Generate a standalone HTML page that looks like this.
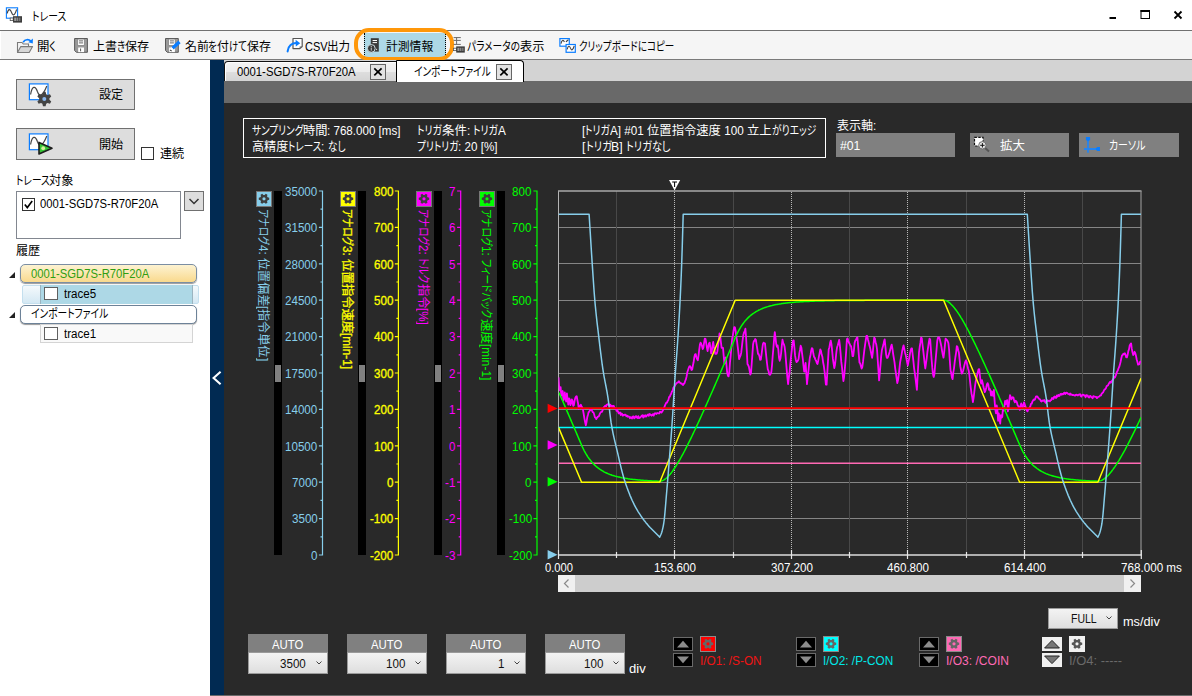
<!DOCTYPE html>
<html lang="ja"><head><meta charset="utf-8"><title>トレース</title>
<style>
html,body{margin:0;padding:0;}
body{width:1192px;height:696px;position:relative;overflow:hidden;background:#fff;font-family:"Liberation Sans","Noto Sans CJK JP",sans-serif;font-size:12px;}
.a{position:absolute;box-sizing:border-box;}
.t{position:absolute;white-space:nowrap;display:block;font-feature-settings:"palt";}
.r{position:absolute;top:0;white-space:pre;transform-origin:0 50%;}
svg{position:absolute;overflow:visible;}
</style></head><body>
<div class="a" style="left:0px;top:0px;width:1192px;height:30px;background:#fff;"></div>
<span class="t" style="left:31.5px;top:7.6499999999999995px;height:18px;line-height:18px;font-size:12px;color:#000;"><span class="r" style="left:0.00px;transform:scaleX(0.818);">トレース</span></span>
<svg style="left:1100px;top:0" width="92" height="30" viewBox="0 0 92 30"><rect x="9.5" y="17" width="6.5" height="2" fill="#000"/><rect x="41" y="10.5" width="8.5" height="8" fill="none" stroke="#000" stroke-width="1"/><rect x="40.5" y="10" width="9.5" height="2" fill="#000"/><path d="M74.5 11.5 L81.5 18.5 M81.5 11.5 L74.5 18.5" stroke="#000" stroke-width="1.8" fill="none"/></svg>
<div class="a" style="left:0px;top:30px;width:1192px;height:1px;background:#707070;"></div>
<div class="a" style="left:1px;top:31px;width:1191px;height:28px;background:#f5f5f5;"></div>
<div class="a" style="left:0px;top:59px;width:1192px;height:1px;background:#7a7a7a;"></div>
<div class="a" style="left:364px;top:32.5px;width:82px;height:24.7px;background:#add8e6;border-left:1px dotted #000;border-right:1px dotted #000;"></div>
<div class="a" style="left:354px;top:28px;width:100px;height:33.2px;border:4px solid #ff9709;border-radius:15px;"></div>
<span class="t" style="left:36.5px;top:37.95px;height:18px;line-height:18px;font-size:12px;color:#000;"><span class="r" style="left:0.00px;transform:scaleX(1.036);">開</span><span class="r" style="left:12.45px;transform:scaleX(0.818);">く</span></span>
<span class="t" style="left:92.5px;top:37.95px;height:18px;line-height:18px;font-size:12px;color:#000;"><span class="r" style="left:0.00px;transform:scaleX(1.007);">上書</span><span class="r" style="left:24.17px;transform:scaleX(0.795);">き</span><span class="r" style="left:32.53px;transform:scaleX(1.007);">保存</span></span>
<span class="t" style="left:184.5px;top:37.95px;height:18px;line-height:18px;font-size:12px;color:#000;"><span class="r" style="left:0.00px;transform:scaleX(0.993);">名前</span><span class="r" style="left:23.85px;transform:scaleX(0.785);">を</span><span class="r" style="left:32.55px;transform:scaleX(0.993);">付</span><span class="r" style="left:44.48px;transform:scaleX(0.785);">けて</span><span class="r" style="left:62.35px;transform:scaleX(0.993);">保存</span></span>
<span class="t" style="left:304.5px;top:37.95px;height:18px;line-height:18px;font-size:12px;color:#000;"><span class="r" style="left:0.00px;transform:scaleX(0.915);">CSV</span><span class="r" style="left:22.58px;transform:scaleX(0.963);">出力</span></span>
<span class="t" style="left:385.8px;top:37.95px;height:18px;line-height:18px;font-size:12px;color:#000;"><span class="r" style="left:0.00px;transform:scaleX(0.983);">計測情報</span></span>
<span class="t" style="left:467.1px;top:37.95px;height:18px;line-height:18px;font-size:12px;color:#000;"><span class="r" style="left:0.00px;transform:scaleX(0.805);">パラメータの</span><span class="r" style="left:52.92px;transform:scaleX(1.019);">表示</span></span>
<span class="t" style="left:578.5px;top:37.95px;height:18px;line-height:18px;font-size:12px;color:#000;"><span class="r" style="left:0.00px;transform:scaleX(0.794);">クリップボードにコピー</span></span>
<div class="a" style="left:0px;top:60px;width:210px;height:636px;background:#fff;"></div>
<div class="a" style="left:210px;top:60px;width:14px;height:636px;background:#012a52;"></div>
<div class="a" style="left:224px;top:60px;width:968px;height:21px;background:#d3d3d3;"></div>
<div class="a" style="left:224px;top:81px;width:968px;height:22px;background:#696969;"></div>
<div class="a" style="left:224px;top:103px;width:968px;height:593px;background:#292929;"></div>
<div class="a" style="left:16px;top:79px;width:119px;height:31px;background:#dddddd;border:1px solid #707070;"></div>
<div class="a" style="left:16px;top:128px;width:119px;height:32px;background:#dddddd;border:1px solid #707070;"></div>
<span class="t" style="left:99.0px;top:86.45px;height:18px;line-height:18px;font-size:12px;color:#000;"><span class="r" style="left:0.00px;transform:scaleX(1.008);">設定</span></span>
<span class="t" style="left:99.0px;top:135.95px;height:18px;line-height:18px;font-size:12px;color:#000;"><span class="r" style="left:0.00px;transform:scaleX(1.008);">開始</span></span>
<div class="a" style="left:141px;top:147px;width:13px;height:13px;background:#fff;border:1px solid #333;"></div>
<span class="t" style="left:160.0px;top:145.45px;height:18px;line-height:18px;font-size:12px;color:#000;"><span class="r" style="left:0.00px;transform:scaleX(1.008);">連続</span></span>
<span class="t" style="left:15.5px;top:172.45px;height:18px;line-height:18px;font-size:12px;color:#000;"><span class="r" style="left:0.00px;transform:scaleX(0.806);">トレース</span><span class="r" style="left:33.70px;transform:scaleX(1.020);">対象</span></span>
<div class="a" style="left:16px;top:191px;width:165px;height:48px;background:#fff;border:1px solid #828790;"></div>
<div class="a" style="left:21.5px;top:197.5px;width:13px;height:13px;background:#fff;border:1px solid #333;"></div>
<svg style="left:21.5px;top:197.5px" width="13" height="13" viewBox="0 0 13 13"><path d="M2.8 6.4 L5.3 9.6 L10.2 3" stroke="#000" stroke-width="1.6" fill="none"/></svg>
<span class="t" style="left:39.5px;top:195.15px;height:18px;line-height:18px;font-size:12px;color:#000;"><span class="r" style="left:0.00px;transform:scaleX(0.938);">0001-SGD7S-R70F20A</span></span>
<div class="a" style="left:184px;top:191px;width:20px;height:20px;background:#dddddd;border:1px solid #707070;"></div>
<svg style="left:184px;top:191px" width="20" height="20" viewBox="0 0 20 20"><path d="M5.5 8 L10 12.5 L14.5 8" stroke="#333" stroke-width="1.5" fill="none"/></svg>
<span class="t" style="left:15.5px;top:242.45px;height:18px;line-height:18px;font-size:12px;color:#000;"><span class="r" style="left:0.00px;transform:scaleX(1.008);">履歴</span></span>
<svg style="left:8px;top:268px" width="8" height="60" viewBox="0 0 8 60"><path d="M7 4 L7 10 L1 10 Z" fill="#222"/><path d="M7 44 L7 50 L1 50 Z" fill="#222"/></svg>
<div class="a" style="left:20px;top:264px;width:177px;height:19px;border:1px solid #7b8ea3;border-radius:5px;background:linear-gradient(#fdf3d2,#f9d98d);box-shadow:0 1px 1px #999;"></div>
<span class="t" style="left:30.5px;top:264.65px;height:18px;line-height:18px;font-size:12px;color:#2f9e12;"><span class="r" style="left:0.00px;transform:scaleX(0.938);">0001-SGD7S-R70F20A</span></span>
<div class="a" style="left:22px;top:284.5px;width:176.6px;height:19px;background:linear-gradient(#f4f9fc,#d4e8f3);border:1px solid #c4dfee;border-radius:2px;"></div>
<div class="a" style="left:40.2px;top:285px;width:152.6px;height:18.5px;background:#add8e6;border-left:1px solid #9bb4c0;border-right:1px solid #9bb4c0;"></div>
<div class="a" style="left:43.8px;top:287px;width:14px;height:13px;background:#fff;border:1px solid #606060;"></div>
<span class="t" style="left:63.5px;top:285.15px;height:18px;line-height:18px;font-size:12px;color:#000;"><span class="r" style="left:0.00px;transform:scaleX(0.965);">trace5</span></span>
<div class="a" style="left:20px;top:304.5px;width:177px;height:19px;border:1px solid #6d8298;border-radius:5px;background:#fff;box-shadow:0 1px 1px #999;"></div>
<span class="t" style="left:30.5px;top:305.45px;height:18px;line-height:18px;font-size:12px;color:#000;"><span class="r" style="left:0.00px;transform:scaleX(0.809);">インポートファイル</span></span>
<div class="a" style="left:40px;top:324px;width:153px;height:19.4px;background:#f9f9f9;border:1px solid #d4d4d4;"></div>
<div class="a" style="left:43.8px;top:327px;width:14px;height:13px;background:#fff;border:1px solid #606060;"></div>
<span class="t" style="left:63.5px;top:325.15px;height:18px;line-height:18px;font-size:12px;color:#000;"><span class="r" style="left:0.00px;transform:scaleX(0.965);">trace1</span></span>
<svg style="left:210px;top:368px" width="14" height="18" viewBox="0 0 14 18"><path d="M10.6 3.8 L3.6 10 L10.6 16.2" stroke="#fff" stroke-width="2.1" fill="none"/></svg>
<div class="a" style="left:224px;top:60.5px;width:173px;height:20.5px;background:linear-gradient(#f4f4f4,#ececec 52%,#dedede 52%,#d4d4d4);border:1px solid #111;border-bottom:none;border-radius:4px 0 0 0;box-shadow:inset 1px 1px 0 #fff;"></div>
<span class="t" style="left:237.0px;top:63.15px;height:18px;line-height:18px;font-size:12px;color:#000;"><span class="r" style="left:0.00px;transform:scaleX(0.941);">0001-SGD7S-R70F20A</span></span>
<div class="a" style="left:370px;top:64px;width:16px;height:15.6px;background:#e2e2e2;border:1.2px solid #666;"></div>
<svg style="left:370px;top:64px" width="16" height="16" viewBox="0 0 16 16"><path d="M4.3 4.3 L11.6 11.4 M11.6 4.3 L4.3 11.4" stroke="#000" stroke-width="1.7" fill="none"/></svg>
<div class="a" style="left:396px;top:59.6px;width:128px;height:22.4px;background:#fff;border:1.4px solid #000;border-left-width:1.8px;border-right-width:1.1px;border-bottom:none;border-radius:1px 4px 0 0;"></div>
<span class="t" style="left:413.5px;top:63.45px;height:18px;line-height:18px;font-size:12px;color:#000;"><span class="r" style="left:0.00px;transform:scaleX(0.804);">インポートファイル</span></span>
<div class="a" style="left:496px;top:64px;width:16px;height:15.6px;background:#e2e2e2;border:1.2px solid #666;"></div>
<svg style="left:496px;top:64px" width="16" height="16" viewBox="0 0 16 16"><path d="M4.3 4.3 L11.6 11.4 M11.6 4.3 L4.3 11.4" stroke="#000" stroke-width="1.7" fill="none"/></svg>
<div class="a" style="left:243px;top:118px;width:583px;height:40px;border:1px solid #fff;"></div>
<span class="t" style="left:251.5px;top:121.95px;height:18px;line-height:18px;font-size:12px;color:#fff;"><span class="r" style="left:0.00px;transform:scaleX(0.804);">サンプリング</span><span class="r" style="left:51.49px;transform:scaleX(1.018);">時間</span><span class="r" style="left:75.94px;transform:scaleX(0.967);">: 768.000 [ms]</span></span>
<span class="t" style="left:251.5px;top:137.95px;height:18px;line-height:18px;font-size:12px;color:#fff;"><span class="r" style="left:0.00px;transform:scaleX(1.010);">高精度</span><span class="r" style="left:36.39px;transform:scaleX(0.798);">トレース</span><span class="r" style="left:69.78px;transform:scaleX(0.960);">: </span><span class="r" style="left:76.19px;transform:scaleX(0.798);">なし</span></span>
<span class="t" style="left:416.9px;top:121.95px;height:18px;line-height:18px;font-size:12px;color:#fff;"><span class="r" style="left:0.00px;transform:scaleX(0.817);">トリガ</span><span class="r" style="left:24.96px;transform:scaleX(1.035);">条件</span><span class="r" style="left:49.81px;transform:scaleX(0.983);">: </span><span class="r" style="left:56.36px;transform:scaleX(0.817);">トリガ</span><span class="r" style="left:81.32px;transform:scaleX(0.983);">A</span></span>
<span class="t" style="left:416.9px;top:137.95px;height:18px;line-height:18px;font-size:12px;color:#fff;"><span class="r" style="left:0.00px;transform:scaleX(0.807);">プリトリガ</span><span class="r" style="left:41.50px;transform:scaleX(0.971);">: 20 [%]</span></span>
<span class="t" style="left:582.2px;top:121.95px;height:18px;line-height:18px;font-size:12px;color:#fff;"><span class="r" style="left:0.00px;transform:scaleX(0.976);">[</span><span class="r" style="left:3.26px;transform:scaleX(0.811);">トリガ</span><span class="r" style="left:28.04px;transform:scaleX(0.976);">A] #01 </span><span class="r" style="left:65.14px;transform:scaleX(1.027);">位置指令速度</span><span class="r" style="left:139.11px;transform:scaleX(0.976);"> 100 </span><span class="r" style="left:165.16px;transform:scaleX(1.027);">立上</span><span class="r" style="left:189.83px;transform:scaleX(0.811);">がりエッジ</span></span>
<span class="t" style="left:582.2px;top:137.95px;height:18px;line-height:18px;font-size:12px;color:#fff;"><span class="r" style="left:0.00px;transform:scaleX(1.019);">[</span><span class="r" style="left:3.41px;transform:scaleX(0.848);">トリガ</span><span class="r" style="left:29.29px;transform:scaleX(1.019);">B] </span><span class="r" style="left:44.24px;transform:scaleX(0.848);">トリガなし</span></span>
<span class="t" style="left:837.1px;top:116.95px;height:18px;line-height:18px;font-size:12px;color:#fff;"><span class="r" style="left:0.00px;">表示軸</span><span class="r" style="left:36.02px;transform:scaleX(0.950);">:</span></span>
<div class="a" style="left:836px;top:133px;width:119px;height:24px;background:#808080;"></div>
<span class="t" style="left:840.1px;top:136.65px;height:18px;line-height:18px;font-size:12px;color:#fff;"><span class="r" style="left:0.00px;transform:scaleX(1.018);">#01</span></span>
<div class="a" style="left:970px;top:133px;width:99px;height:24px;background:#808080;"></div>
<span class="t" style="left:999.5px;top:136.95px;height:18px;line-height:18px;font-size:12px;color:#fff;"><span class="r" style="left:0.00px;transform:scaleX(1.037);">拡大</span></span>
<div class="a" style="left:1079px;top:133px;width:100px;height:24px;background:#808080;"></div>
<span class="t" style="left:1108.9px;top:136.95px;height:18px;line-height:18px;font-size:12px;color:#fff;"><span class="r" style="left:0.00px;transform:scaleX(0.826);">カーソル</span></span>
<div class="a" style="left:256.0px;top:191px;width:16px;height:16px;background:#87ceeb;border:1px solid #777;"></div>
<svg style="left:256.0px;top:191px" width="16" height="16" viewBox="0 0 16 16"><path d="M11.63 6.36 L13.22 6.86 L13.22 8.74 L11.63 9.24 L11.06 10.22 L11.42 11.85 L9.80 12.79 L8.57 11.66 L7.43 11.66 L6.20 12.79 L4.58 11.85 L4.94 10.22 L4.37 9.24 L2.78 8.74 L2.78 6.86 L4.37 6.36 L4.94 5.38 L4.58 3.75 L6.20 2.81 L7.43 3.94 L8.57 3.94 L9.80 2.81 L11.42 3.75 L11.06 5.38Z M9.60 7.80 A1.6 1.6 0 1 0 6.40 7.80 A1.6 1.6 0 1 0 9.60 7.80Z" fill="#3e3e3e" fill-rule="evenodd"/></svg>
<div class="a" style="left:274px;top:191px;width:8px;height:363.6px;background:#000;"></div>
<div class="a" style="left:275px;top:364.5px;width:6px;height:17px;background:#808080;"></div>
<svg style="left:0;top:0" width="1192" height="696"><path d="M322.5 190.5 L322.5 555.5 M318.9 191.0 L322.5 191.0 M320.5 209.2 L322.5 209.2 M318.9 227.4 L322.5 227.4 M320.5 245.6 L322.5 245.6 M318.9 263.8 L322.5 263.8 M320.5 282.0 L322.5 282.0 M318.9 300.2 L322.5 300.2 M320.5 318.4 L322.5 318.4 M318.9 336.6 L322.5 336.6 M320.5 354.8 L322.5 354.8 M318.9 373.0 L322.5 373.0 M320.5 391.2 L322.5 391.2 M318.9 409.4 L322.5 409.4 M320.5 427.6 L322.5 427.6 M318.9 445.8 L322.5 445.8 M320.5 464.0 L322.5 464.0 M318.9 482.2 L322.5 482.2 M320.5 500.4 L322.5 500.4 M318.9 518.6 L322.5 518.6 M320.5 536.8 L322.5 536.8 M318.9 555.0 L322.5 555.0" stroke="#87ceeb" stroke-width="1.2" fill="none"/></svg>
<span class="t" style="left:317.29999999999995px;top:182.75px;height:18px;line-height:18px;font-size:12px;color:#87ceeb;"><span class="r" style="left:-32.25px;transform:scaleX(0.966);">35000</span></span>
<span class="t" style="left:317.29999999999995px;top:219.15px;height:18px;line-height:18px;font-size:12px;color:#87ceeb;"><span class="r" style="left:-32.25px;transform:scaleX(0.966);">31500</span></span>
<span class="t" style="left:317.29999999999995px;top:255.55000000000004px;height:18px;line-height:18px;font-size:12px;color:#87ceeb;"><span class="r" style="left:-32.25px;transform:scaleX(0.966);">28000</span></span>
<span class="t" style="left:317.29999999999995px;top:291.95px;height:18px;line-height:18px;font-size:12px;color:#87ceeb;"><span class="r" style="left:-32.25px;transform:scaleX(0.966);">24500</span></span>
<span class="t" style="left:317.29999999999995px;top:328.35px;height:18px;line-height:18px;font-size:12px;color:#87ceeb;"><span class="r" style="left:-32.25px;transform:scaleX(0.966);">21000</span></span>
<span class="t" style="left:317.29999999999995px;top:364.75px;height:18px;line-height:18px;font-size:12px;color:#87ceeb;"><span class="r" style="left:-32.25px;transform:scaleX(0.966);">17500</span></span>
<span class="t" style="left:317.29999999999995px;top:401.15px;height:18px;line-height:18px;font-size:12px;color:#87ceeb;"><span class="r" style="left:-32.25px;transform:scaleX(0.966);">14000</span></span>
<span class="t" style="left:317.29999999999995px;top:437.54999999999995px;height:18px;line-height:18px;font-size:12px;color:#87ceeb;"><span class="r" style="left:-32.25px;transform:scaleX(0.966);">10500</span></span>
<span class="t" style="left:317.29999999999995px;top:473.95px;height:18px;line-height:18px;font-size:12px;color:#87ceeb;"><span class="r" style="left:-25.80px;transform:scaleX(0.966);">7000</span></span>
<span class="t" style="left:317.29999999999995px;top:510.3499999999999px;height:18px;line-height:18px;font-size:12px;color:#87ceeb;"><span class="r" style="left:-25.80px;transform:scaleX(0.966);">3500</span></span>
<span class="t" style="left:317.29999999999995px;top:546.75px;height:18px;line-height:18px;font-size:12px;color:#87ceeb;"><span class="r" style="left:-6.45px;transform:scaleX(0.964);">0</span></span>
<span class="t" style="left:262.9px;top:200.25px;height:18px;line-height:18px;font-size:12px;color:#87ceeb;transform:rotate(90deg);transform-origin:0 50%;"><span class="r" style="left:0.00px;transform:scaleX(0.797);">アナログ</span><span class="r" style="left:35.86px;transform:scaleX(0.959);">4: </span><span class="r" style="left:48.65px;transform:scaleX(1.009);">位置偏差</span><span class="r" style="left:97.12px;transform:scaleX(0.959);">[</span><span class="r" style="left:100.33px;transform:scaleX(1.009);">指令単位</span><span class="r" style="left:148.79px;transform:scaleX(0.959);">]</span></span>
<div class="a" style="left:340.0px;top:191px;width:16px;height:16px;background:#ffff00;border:1px solid #777;"></div>
<svg style="left:340.0px;top:191px" width="16" height="16" viewBox="0 0 16 16"><path d="M11.63 6.36 L13.22 6.86 L13.22 8.74 L11.63 9.24 L11.06 10.22 L11.42 11.85 L9.80 12.79 L8.57 11.66 L7.43 11.66 L6.20 12.79 L4.58 11.85 L4.94 10.22 L4.37 9.24 L2.78 8.74 L2.78 6.86 L4.37 6.36 L4.94 5.38 L4.58 3.75 L6.20 2.81 L7.43 3.94 L8.57 3.94 L9.80 2.81 L11.42 3.75 L11.06 5.38Z M9.60 7.80 A1.6 1.6 0 1 0 6.40 7.80 A1.6 1.6 0 1 0 9.60 7.80Z" fill="#3e3e3e" fill-rule="evenodd"/></svg>
<div class="a" style="left:358px;top:191px;width:8px;height:363.6px;background:#000;"></div>
<div class="a" style="left:359px;top:364.5px;width:6px;height:17px;background:#808080;"></div>
<svg style="left:0;top:0" width="1192" height="696"><path d="M398.4 190.5 L398.4 555.5 M394.79999999999995 191.0 L398.4 191.0 M396.4 209.2 L398.4 209.2 M394.79999999999995 227.4 L398.4 227.4 M396.4 245.6 L398.4 245.6 M394.79999999999995 263.8 L398.4 263.8 M396.4 282.0 L398.4 282.0 M394.79999999999995 300.2 L398.4 300.2 M396.4 318.4 L398.4 318.4 M394.79999999999995 336.6 L398.4 336.6 M396.4 354.8 L398.4 354.8 M394.79999999999995 373.0 L398.4 373.0 M396.4 391.2 L398.4 391.2 M394.79999999999995 409.4 L398.4 409.4 M396.4 427.6 L398.4 427.6 M394.79999999999995 445.8 L398.4 445.8 M396.4 464.0 L398.4 464.0 M394.79999999999995 482.2 L398.4 482.2 M396.4 500.4 L398.4 500.4 M394.79999999999995 518.6 L398.4 518.6 M396.4 536.8 L398.4 536.8 M394.79999999999995 555.0 L398.4 555.0" stroke="#ffff00" stroke-width="1.2" fill="none"/></svg>
<span class="t" style="left:393.19999999999993px;top:182.75px;height:18px;line-height:18px;font-size:12px;color:#ffff00;-webkit-text-stroke:0.3px #ffff00;"><span class="r" style="left:-19.35px;transform:scaleX(0.966);">800</span></span>
<span class="t" style="left:393.19999999999993px;top:219.15px;height:18px;line-height:18px;font-size:12px;color:#ffff00;-webkit-text-stroke:0.3px #ffff00;"><span class="r" style="left:-19.35px;transform:scaleX(0.966);">700</span></span>
<span class="t" style="left:393.19999999999993px;top:255.55000000000004px;height:18px;line-height:18px;font-size:12px;color:#ffff00;-webkit-text-stroke:0.3px #ffff00;"><span class="r" style="left:-19.35px;transform:scaleX(0.966);">600</span></span>
<span class="t" style="left:393.19999999999993px;top:291.95px;height:18px;line-height:18px;font-size:12px;color:#ffff00;-webkit-text-stroke:0.3px #ffff00;"><span class="r" style="left:-19.35px;transform:scaleX(0.966);">500</span></span>
<span class="t" style="left:393.19999999999993px;top:328.35px;height:18px;line-height:18px;font-size:12px;color:#ffff00;-webkit-text-stroke:0.3px #ffff00;"><span class="r" style="left:-19.35px;transform:scaleX(0.966);">400</span></span>
<span class="t" style="left:393.19999999999993px;top:364.75px;height:18px;line-height:18px;font-size:12px;color:#ffff00;-webkit-text-stroke:0.3px #ffff00;"><span class="r" style="left:-19.35px;transform:scaleX(0.966);">300</span></span>
<span class="t" style="left:393.19999999999993px;top:401.15px;height:18px;line-height:18px;font-size:12px;color:#ffff00;-webkit-text-stroke:0.3px #ffff00;"><span class="r" style="left:-19.35px;transform:scaleX(0.966);">200</span></span>
<span class="t" style="left:393.19999999999993px;top:437.54999999999995px;height:18px;line-height:18px;font-size:12px;color:#ffff00;-webkit-text-stroke:0.3px #ffff00;"><span class="r" style="left:-19.35px;transform:scaleX(0.966);">100</span></span>
<span class="t" style="left:393.19999999999993px;top:473.95px;height:18px;line-height:18px;font-size:12px;color:#ffff00;-webkit-text-stroke:0.3px #ffff00;"><span class="r" style="left:-6.45px;transform:scaleX(0.964);">0</span></span>
<span class="t" style="left:393.19999999999993px;top:510.3499999999999px;height:18px;line-height:18px;font-size:12px;color:#ffff00;-webkit-text-stroke:0.3px #ffff00;"><span class="r" style="left:-23.25px;transform:scaleX(0.967);">-100</span></span>
<span class="t" style="left:393.19999999999993px;top:546.75px;height:18px;line-height:18px;font-size:12px;color:#ffff00;-webkit-text-stroke:0.3px #ffff00;"><span class="r" style="left:-23.25px;transform:scaleX(0.967);">-200</span></span>
<span class="t" style="left:346.9px;top:200.25px;height:18px;line-height:18px;font-size:12px;color:#ffff00;transform:rotate(90deg);transform-origin:0 50%;-webkit-text-stroke:0.3px #ffff00;"><span class="r" style="left:0.00px;transform:scaleX(0.815);">アナログ</span><span class="r" style="left:36.65px;transform:scaleX(0.980);">3: </span><span class="r" style="left:49.73px;transform:scaleX(1.032);">位置指令速度</span><span class="r" style="left:124.04px;transform:scaleX(0.980);">[min-1]</span></span>
<div class="a" style="left:416.0px;top:191px;width:16px;height:16px;background:#ff00ff;border:1px solid #777;"></div>
<svg style="left:416.0px;top:191px" width="16" height="16" viewBox="0 0 16 16"><path d="M11.63 6.36 L13.22 6.86 L13.22 8.74 L11.63 9.24 L11.06 10.22 L11.42 11.85 L9.80 12.79 L8.57 11.66 L7.43 11.66 L6.20 12.79 L4.58 11.85 L4.94 10.22 L4.37 9.24 L2.78 8.74 L2.78 6.86 L4.37 6.36 L4.94 5.38 L4.58 3.75 L6.20 2.81 L7.43 3.94 L8.57 3.94 L9.80 2.81 L11.42 3.75 L11.06 5.38Z M9.60 7.80 A1.6 1.6 0 1 0 6.40 7.80 A1.6 1.6 0 1 0 9.60 7.80Z" fill="#3e3e3e" fill-rule="evenodd"/></svg>
<div class="a" style="left:433.5px;top:191px;width:8px;height:363.6px;background:#000;"></div>
<div class="a" style="left:434.5px;top:364.5px;width:6px;height:17px;background:#808080;"></div>
<svg style="left:0;top:0" width="1192" height="696"><path d="M460.7 190.5 L460.7 555.5 M457.09999999999997 191.0 L460.7 191.0 M458.7 209.2 L460.7 209.2 M457.09999999999997 227.4 L460.7 227.4 M458.7 245.6 L460.7 245.6 M457.09999999999997 263.8 L460.7 263.8 M458.7 282.0 L460.7 282.0 M457.09999999999997 300.2 L460.7 300.2 M458.7 318.4 L460.7 318.4 M457.09999999999997 336.6 L460.7 336.6 M458.7 354.8 L460.7 354.8 M457.09999999999997 373.0 L460.7 373.0 M458.7 391.2 L460.7 391.2 M457.09999999999997 409.4 L460.7 409.4 M458.7 427.6 L460.7 427.6 M457.09999999999997 445.8 L460.7 445.8 M458.7 464.0 L460.7 464.0 M457.09999999999997 482.2 L460.7 482.2 M458.7 500.4 L460.7 500.4 M457.09999999999997 518.6 L460.7 518.6 M458.7 536.8 L460.7 536.8 M457.09999999999997 555.0 L460.7 555.0" stroke="#ff00ff" stroke-width="1.2" fill="none"/></svg>
<span class="t" style="left:455.49999999999994px;top:182.75px;height:18px;line-height:18px;font-size:12px;color:#ff00ff;"><span class="r" style="left:-6.45px;transform:scaleX(0.964);">7</span></span>
<span class="t" style="left:455.49999999999994px;top:219.15px;height:18px;line-height:18px;font-size:12px;color:#ff00ff;"><span class="r" style="left:-6.45px;transform:scaleX(0.964);">6</span></span>
<span class="t" style="left:455.49999999999994px;top:255.55000000000004px;height:18px;line-height:18px;font-size:12px;color:#ff00ff;"><span class="r" style="left:-6.45px;transform:scaleX(0.964);">5</span></span>
<span class="t" style="left:455.49999999999994px;top:291.95px;height:18px;line-height:18px;font-size:12px;color:#ff00ff;"><span class="r" style="left:-6.45px;transform:scaleX(0.964);">4</span></span>
<span class="t" style="left:455.49999999999994px;top:328.35px;height:18px;line-height:18px;font-size:12px;color:#ff00ff;"><span class="r" style="left:-6.45px;transform:scaleX(0.964);">3</span></span>
<span class="t" style="left:455.49999999999994px;top:364.75px;height:18px;line-height:18px;font-size:12px;color:#ff00ff;"><span class="r" style="left:-6.45px;transform:scaleX(0.964);">2</span></span>
<span class="t" style="left:455.49999999999994px;top:401.15px;height:18px;line-height:18px;font-size:12px;color:#ff00ff;"><span class="r" style="left:-6.45px;transform:scaleX(0.964);">1</span></span>
<span class="t" style="left:455.49999999999994px;top:437.54999999999995px;height:18px;line-height:18px;font-size:12px;color:#ff00ff;"><span class="r" style="left:-6.45px;transform:scaleX(0.964);">0</span></span>
<span class="t" style="left:455.49999999999994px;top:473.95px;height:18px;line-height:18px;font-size:12px;color:#ff00ff;"><span class="r" style="left:-10.35px;transform:scaleX(0.970);">-1</span></span>
<span class="t" style="left:455.49999999999994px;top:510.3499999999999px;height:18px;line-height:18px;font-size:12px;color:#ff00ff;"><span class="r" style="left:-10.35px;transform:scaleX(0.970);">-2</span></span>
<span class="t" style="left:455.49999999999994px;top:546.75px;height:18px;line-height:18px;font-size:12px;color:#ff00ff;"><span class="r" style="left:-10.35px;transform:scaleX(0.970);">-3</span></span>
<span class="t" style="left:422.9px;top:200.25px;height:18px;line-height:18px;font-size:12px;color:#ff00ff;transform:rotate(90deg);transform-origin:0 50%;"><span class="r" style="left:0.00px;transform:scaleX(0.808);">アナログ</span><span class="r" style="left:36.35px;transform:scaleX(0.972);">2: </span><span class="r" style="left:49.32px;transform:scaleX(0.808);">トルク</span><span class="r" style="left:74.57px;transform:scaleX(1.023);">指令</span><span class="r" style="left:99.14px;transform:scaleX(0.972);">[%]</span></span>
<div class="a" style="left:479.0px;top:191px;width:16px;height:16px;background:#00ff00;border:1px solid #777;"></div>
<svg style="left:479.0px;top:191px" width="16" height="16" viewBox="0 0 16 16"><path d="M11.63 6.36 L13.22 6.86 L13.22 8.74 L11.63 9.24 L11.06 10.22 L11.42 11.85 L9.80 12.79 L8.57 11.66 L7.43 11.66 L6.20 12.79 L4.58 11.85 L4.94 10.22 L4.37 9.24 L2.78 8.74 L2.78 6.86 L4.37 6.36 L4.94 5.38 L4.58 3.75 L6.20 2.81 L7.43 3.94 L8.57 3.94 L9.80 2.81 L11.42 3.75 L11.06 5.38Z M9.60 7.80 A1.6 1.6 0 1 0 6.40 7.80 A1.6 1.6 0 1 0 9.60 7.80Z" fill="#3e3e3e" fill-rule="evenodd"/></svg>
<div class="a" style="left:497px;top:191px;width:8px;height:363.6px;background:#000;"></div>
<div class="a" style="left:498px;top:364.5px;width:6px;height:17px;background:#808080;"></div>
<svg style="left:0;top:0" width="1192" height="696"><path d="M537 190.5 L537 555.5 M533.4 191.0 L537 191.0 M535 209.2 L537 209.2 M533.4 227.4 L537 227.4 M535 245.6 L537 245.6 M533.4 263.8 L537 263.8 M535 282.0 L537 282.0 M533.4 300.2 L537 300.2 M535 318.4 L537 318.4 M533.4 336.6 L537 336.6 M535 354.8 L537 354.8 M533.4 373.0 L537 373.0 M535 391.2 L537 391.2 M533.4 409.4 L537 409.4 M535 427.6 L537 427.6 M533.4 445.8 L537 445.8 M535 464.0 L537 464.0 M533.4 482.2 L537 482.2 M535 500.4 L537 500.4 M533.4 518.6 L537 518.6 M535 536.8 L537 536.8 M533.4 555.0 L537 555.0" stroke="#00ff00" stroke-width="1.2" fill="none"/></svg>
<span class="t" style="left:531.8px;top:182.75px;height:18px;line-height:18px;font-size:12px;color:#00ff00;"><span class="r" style="left:-19.35px;transform:scaleX(0.966);">800</span></span>
<span class="t" style="left:531.8px;top:219.15px;height:18px;line-height:18px;font-size:12px;color:#00ff00;"><span class="r" style="left:-19.35px;transform:scaleX(0.966);">700</span></span>
<span class="t" style="left:531.8px;top:255.55000000000004px;height:18px;line-height:18px;font-size:12px;color:#00ff00;"><span class="r" style="left:-19.35px;transform:scaleX(0.966);">600</span></span>
<span class="t" style="left:531.8px;top:291.95px;height:18px;line-height:18px;font-size:12px;color:#00ff00;"><span class="r" style="left:-19.35px;transform:scaleX(0.966);">500</span></span>
<span class="t" style="left:531.8px;top:328.35px;height:18px;line-height:18px;font-size:12px;color:#00ff00;"><span class="r" style="left:-19.35px;transform:scaleX(0.966);">400</span></span>
<span class="t" style="left:531.8px;top:364.75px;height:18px;line-height:18px;font-size:12px;color:#00ff00;"><span class="r" style="left:-19.35px;transform:scaleX(0.966);">300</span></span>
<span class="t" style="left:531.8px;top:401.15px;height:18px;line-height:18px;font-size:12px;color:#00ff00;"><span class="r" style="left:-19.35px;transform:scaleX(0.966);">200</span></span>
<span class="t" style="left:531.8px;top:437.54999999999995px;height:18px;line-height:18px;font-size:12px;color:#00ff00;"><span class="r" style="left:-19.35px;transform:scaleX(0.966);">100</span></span>
<span class="t" style="left:531.8px;top:473.95px;height:18px;line-height:18px;font-size:12px;color:#00ff00;"><span class="r" style="left:-6.45px;transform:scaleX(0.964);">0</span></span>
<span class="t" style="left:531.8px;top:510.3499999999999px;height:18px;line-height:18px;font-size:12px;color:#00ff00;"><span class="r" style="left:-23.25px;transform:scaleX(0.967);">-100</span></span>
<span class="t" style="left:531.8px;top:546.75px;height:18px;line-height:18px;font-size:12px;color:#00ff00;"><span class="r" style="left:-23.25px;transform:scaleX(0.967);">-200</span></span>
<span class="t" style="left:485.9px;top:200.25px;height:18px;line-height:18px;font-size:12px;color:#00ff00;transform:rotate(90deg);transform-origin:0 50%;"><span class="r" style="left:0.00px;transform:scaleX(0.824);">アナログ</span><span class="r" style="left:37.07px;transform:scaleX(0.991);">1: </span><span class="r" style="left:50.29px;transform:scaleX(0.824);">フィードバック</span><span class="r" style="left:109.58px;transform:scaleX(1.043);">速度</span><span class="r" style="left:134.63px;transform:scaleX(0.991);">[min-1]</span></span>
<svg style="left:0;top:0" width="1192" height="696" viewBox="0 0 1192 696"><path d="M558.5 227.5 H1141.0 M558.5 263.5 H1141.0 M558.5 300.5 H1141.0 M558.5 336.5 H1141.0 M558.5 373.5 H1141.0 M558.5 409.5 H1141.0 M558.5 445.5 H1141.0 M558.5 482.5 H1141.0 M558.5 518.5 H1141.0 " stroke="#858585" stroke-width="1" fill="none"/><path d="M616.5 191.0 V555.0 M733.5 191.0 V555.0 M849.5 191.0 V555.0 M966.5 191.0 V555.0 M1082.5 191.0 V555.0 " stroke="#484848" stroke-width="1" fill="none"/><path d="M674.5 192.0 V555.0 M791.5 192.0 V555.0 M907.5 192.0 V555.0 M1024.5 192.0 V555.0 " stroke="#b8b8b8" stroke-width="1" stroke-dasharray="1 1" fill="none"/><path d="M558.5 191.0 V555.0" stroke="#b4b4b4" stroke-width="1"/><path d="M558.0 191.0 H1141.5" stroke="#a8a8a8" stroke-width="1.5"/><path d="M1141.0 191.0 V555.0" stroke="#909090" stroke-width="1.2"/><clipPath id="cp"><rect x="558.5" y="191.0" width="582.5" height="364.0"/></clipPath><g clip-path="url(#cp)" fill="none" stroke-linejoin="round"><path d="M558.5 463.2 H1141.0" stroke="#ff69b4" stroke-width="1.6"/><path d="M558.5 427.5 H1141.0" stroke="#00ffff" stroke-width="1.6"/><polyline points="558.5,377.4 559.2,387.7 559.9,390.3 560.6,387.1 561.3,395.6 562.0,393.6 562.7,391.0 563.4,400.5 564.1,398.6 564.8,392.5 565.5,398.4 566.2,401.5 566.9,393.4 567.6,399.5 568.3,404.6 569.0,398.3 569.7,399.3 570.4,405.1 571.1,403.4 571.8,399.3 572.5,401.0 573.2,405.8 573.9,405.2 574.6,400.5 575.3,397.9 576.0,396.6 576.7,396.2 577.4,400.1 578.1,403.6 578.8,409.1 579.5,408.0 580.2,405.4 580.9,404.8 581.6,406.5 582.3,407.9 583.0,410.0 583.7,414.0 584.4,418.3 585.1,422.0 585.8,425.3 586.5,422.4 587.2,417.6 587.9,415.0 588.6,412.1 589.3,411.8 590.0,409.8 590.7,410.1 591.4,408.9 592.1,410.9 592.8,412.2 593.5,412.5 594.2,414.5 594.9,417.4 595.6,417.6 596.3,419.1 597.0,417.8 597.7,416.6 598.4,416.6 599.1,415.8 599.8,413.9 600.5,412.6 601.2,411.9 601.9,411.9 602.6,410.4 603.3,408.1 604.0,407.1 604.7,406.3 605.4,405.7 606.1,406.4 606.8,404.7 607.5,404.6 608.2,404.1 608.9,404.2 609.6,405.6 610.3,404.8 611.0,406.6 611.7,405.8 612.4,406.7 613.1,406.0 613.8,406.0 614.5,408.3 615.2,408.8 615.9,408.4 616.6,410.9 617.3,410.2 618.0,411.7 618.7,413.4 619.4,413.3 620.1,412.4 620.8,415.1 621.5,413.5 622.2,414.0 622.9,415.7 623.6,414.9 624.3,415.0 625.0,414.6 625.7,414.9 626.4,416.3 627.1,415.6 627.8,416.7 628.5,416.3 629.2,416.7 629.9,418.2 630.6,417.1 631.3,417.5 632.0,418.5 632.7,416.6 633.4,416.4 634.1,418.3 634.8,418.0 635.5,416.4 636.2,416.2 636.9,417.6 637.6,418.1 638.3,416.2 639.0,418.2 639.7,418.0 640.4,417.2 641.1,416.6 641.8,415.6 642.5,415.3 643.2,417.6 643.9,415.5 644.6,416.6 645.3,415.3 646.0,416.6 646.7,415.9 647.4,415.0 648.1,414.5 648.8,415.8 649.5,414.0 650.2,414.3 650.9,415.0 651.6,415.7 652.3,415.0 653.0,414.1 653.7,415.6 654.4,413.7 655.1,413.1 655.8,413.7 656.5,414.0 657.2,413.0 657.9,413.2 658.6,413.3 659.3,413.3 660.0,411.7 660.7,411.8 661.4,412.6 662.1,411.7 662.8,410.5 663.5,409.3 664.2,407.7 664.9,405.6 665.6,404.1 666.3,402.6 667.0,402.7 667.7,400.9 668.4,399.9 669.1,397.0 669.8,396.6 670.5,394.8 671.2,393.7 671.9,391.4 672.6,390.9 673.3,387.9 674.0,387.1 674.7,386.0 675.4,384.8 676.1,383.8 676.8,383.0 677.5,382.5 678.2,382.4 678.9,381.3 679.6,382.2 680.3,383.1 681.0,383.6 681.7,383.4 682.4,384.5 683.1,385.0 683.8,383.8 684.5,383.2 685.2,380.9 685.9,379.4 686.6,376.4 687.3,372.3 688.0,370.2 688.7,368.0 689.4,366.4 690.1,366.2 690.8,367.5 691.5,370.0 692.2,369.5 692.9,365.5 693.6,362.3 694.3,357.3 695.0,354.6 695.7,354.1 696.4,357.2 697.1,359.1 697.8,360.3 698.5,355.6 699.2,349.9 699.9,344.6 700.6,342.6 701.3,344.0 702.0,346.0 702.7,349.0 703.4,347.6 704.1,342.8 704.8,338.6 705.5,338.8 706.2,343.2 706.9,347.5 707.6,351.2 708.3,346.6 709.0,343.4 709.7,342.7 710.4,348.0 711.1,353.5 711.8,351.5 712.5,345.7 713.2,342.0 713.9,346.7 714.6,350.6 715.3,353.9 716.0,353.8 716.7,353.6 717.4,351.2 718.1,345.4 718.8,340.1 719.5,333.5 720.2,335.5 720.9,342.0 721.6,347.8 722.3,347.7 723.0,347.8 723.7,355.9 724.4,363.5 725.1,359.7 725.8,357.3 726.5,365.5 727.2,372.6 727.9,375.7 728.6,376.3 729.3,371.8 730.0,362.3 730.7,355.3 731.4,346.9 732.1,338.9 732.8,335.9 733.5,330.8 734.2,327.1 734.9,327.3 735.6,330.8 736.3,336.3 737.0,340.7 737.7,346.5 738.4,352.3 739.1,359.1 739.8,357.2 740.5,355.7 741.2,352.9 741.9,346.6 742.6,340.3 743.3,335.3 744.0,332.6 744.7,331.1 745.4,328.7 746.1,337.4 746.8,351.0 747.5,364.2 748.2,365.1 748.9,366.9 749.6,370.6 750.3,374.6 751.0,373.2 751.7,363.8 752.4,354.4 753.1,344.2 753.8,341.1 754.5,340.8 755.2,339.0 755.9,339.8 756.6,344.6 757.3,349.0 758.0,353.9 758.7,354.2 759.4,356.2 760.1,359.9 760.8,359.7 761.5,354.8 762.2,349.3 762.9,344.1 763.6,342.6 764.3,343.4 765.0,343.4 765.7,350.9 766.4,357.7 767.1,364.0 767.8,369.3 768.5,370.8 769.2,374.3 769.9,374.9 770.6,373.9 771.3,372.3 772.0,365.4 772.7,355.9 773.4,348.0 774.1,339.1 774.8,332.2 775.5,337.6 776.2,344.0 776.9,346.8 777.6,345.4 778.3,349.4 779.0,357.8 779.7,360.8 780.4,358.6 781.1,353.5 781.8,345.5 782.5,339.7 783.2,342.9 783.9,344.3 784.6,346.8 785.3,352.3 786.0,361.0 786.7,369.6 787.4,377.7 788.1,384.1 788.8,377.9 789.5,373.0 790.2,364.7 790.9,357.9 791.6,351.7 792.3,345.7 793.0,340.8 793.7,340.4 794.4,347.7 795.1,355.7 795.8,359.7 796.5,362.1 797.2,361.5 797.9,360.6 798.6,359.0 799.3,353.4 800.0,350.0 800.7,345.7 801.4,347.7 802.1,353.6 802.8,359.0 803.5,365.6 804.2,371.6 804.9,369.5 805.6,363.0 806.3,373.8 807.0,384.2 807.7,377.2 808.4,371.0 809.1,363.8 809.8,358.0 810.5,355.0 811.2,350.7 811.9,348.1 812.6,348.9 813.3,353.3 814.0,356.7 814.7,357.6 815.4,359.6 816.1,360.8 816.8,362.9 817.5,364.0 818.2,360.7 818.9,356.7 819.6,353.1 820.3,349.5 821.0,351.0 821.7,354.8 822.4,356.8 823.1,362.3 823.8,365.7 824.5,370.9 825.2,377.4 825.9,384.7 826.6,384.7 827.3,372.6 828.0,360.9 828.7,349.4 829.4,347.2 830.1,343.1 830.8,340.6 831.5,344.5 832.2,351.4 832.9,358.9 833.6,363.5 834.3,368.1 835.0,364.7 835.7,358.6 836.4,351.8 837.1,347.2 837.8,345.3 838.5,342.6 839.2,339.8 839.9,345.6 840.6,353.4 841.3,361.9 842.0,367.4 842.7,374.6 843.4,381.1 844.1,376.9 844.8,369.2 845.5,360.8 846.2,351.0 846.9,339.2 847.6,338.5 848.3,341.1 849.0,342.7 849.7,344.0 850.4,345.7 851.1,346.3 851.8,350.5 852.5,356.1 853.2,356.2 853.9,350.5 854.6,343.1 855.3,340.4 856.0,339.9 856.7,338.0 857.4,337.4 858.1,345.6 858.8,354.6 859.5,362.7 860.2,363.4 860.9,366.1 861.6,368.6 862.3,367.2 863.0,361.9 863.7,355.5 864.4,349.7 865.1,344.7 865.8,339.9 866.5,336.0 867.2,335.9 867.9,339.2 868.6,341.9 869.3,345.0 870.0,347.4 870.7,350.8 871.4,354.5 872.1,357.9 872.8,352.6 873.5,344.4 874.2,337.6 874.9,338.5 875.6,342.2 876.3,344.6 877.0,349.2 877.7,359.6 878.4,369.8 879.1,380.4 879.8,373.1 880.5,364.9 881.2,355.9 881.9,350.1 882.6,347.5 883.3,345.1 884.0,341.6 884.7,339.3 885.4,346.5 886.1,354.3 886.8,357.9 887.5,357.9 888.2,356.3 888.9,354.2 889.6,352.1 890.3,349.4 891.0,346.6 891.7,344.6 892.4,348.4 893.1,353.6 893.8,357.9 894.5,362.2 895.2,368.3 895.9,373.1 896.6,378.1 897.3,383.0 898.0,380.3 898.7,375.0 899.4,368.8 900.1,362.4 900.8,358.7 901.5,355.1 902.2,350.9 902.9,347.7 903.6,345.3 904.3,349.0 905.0,352.4 905.7,354.9 906.4,358.6 907.1,362.2 907.8,365.3 908.5,361.6 909.2,358.5 909.9,354.0 910.6,350.6 911.3,348.4 912.0,348.4 912.7,354.8 913.4,361.1 914.1,368.1 914.8,373.0 915.5,378.5 916.2,384.1 916.9,389.9 917.6,376.4 918.3,364.0 919.0,352.3 919.7,347.0 920.4,342.7 921.1,337.6 921.8,338.2 922.5,344.5 923.2,350.2 923.9,356.3 924.6,363.2 925.3,368.5 926.0,363.5 926.7,358.4 927.4,352.0 928.1,347.3 928.8,342.5 929.5,338.6 930.2,339.6 930.9,349.8 931.6,359.5 932.3,367.9 933.0,374.4 933.7,376.9 934.4,374.5 935.1,365.7 935.8,357.9 936.5,350.2 937.2,341.3 937.9,337.9 938.6,337.3 939.3,337.7 940.0,340.1 940.7,343.2 941.4,346.6 942.1,351.1 942.8,354.9 943.5,357.7 944.2,352.2 944.9,345.3 945.6,338.7 946.3,339.5 947.0,340.1 947.7,341.2 948.4,343.1 949.1,349.7 949.8,360.5 950.5,370.3 951.2,372.8 951.9,377.4 952.6,379.1 953.3,372.3 954.0,368.3 954.7,362.2 955.4,357.0 956.1,352.6 956.8,346.2 957.5,346.9 958.2,350.3 958.9,352.8 959.6,359.6 960.3,366.4 961.0,370.0 961.7,373.5 962.4,372.8 963.1,370.8 963.8,367.7 964.5,364.8 965.2,362.1 965.9,360.4 966.6,361.8 967.3,365.1 968.0,368.3 968.7,370.7 969.4,375.2 970.1,382.0 970.8,388.1 971.5,393.4 972.2,397.2 972.9,402.2 973.6,397.9 974.3,392.0 975.0,386.2 975.7,381.4 976.4,378.8 977.1,375.3 977.8,372.2 978.5,369.4 979.2,369.2 979.9,375.5 980.6,381.5 981.3,383.6 982.0,380.2 982.7,382.9 983.4,386.8 984.1,389.2 984.8,392.2 985.5,390.7 986.2,387.8 986.9,384.5 987.6,383.1 988.3,384.7 989.0,389.9 989.7,388.8 990.4,390.6 991.1,395.6 991.8,391.3 992.5,393.4 993.2,395.9 993.9,390.0 994.6,400.6 995.3,409.4 996.0,413.4 996.7,405.4 997.4,409.9 998.1,420.8 998.8,413.4 999.5,418.1 1000.2,423.6 1000.9,415.2 1001.6,417.6 1002.3,416.9 1003.0,407.5 1003.7,410.7 1004.4,406.8 1005.1,400.9 1005.8,404.0 1006.5,400.8 1007.2,400.1 1007.9,411.4 1008.6,407.0 1009.3,400.6 1010.0,395.2 1010.7,396.9 1011.4,399.3 1012.1,397.7 1012.8,397.1 1013.5,397.7 1014.2,400.9 1014.9,402.3 1015.6,400.8 1016.3,401.2 1017.0,402.7 1017.7,405.5 1018.4,406.1 1019.1,407.7 1019.8,409.9 1020.5,405.8 1021.2,403.4 1021.9,406.4 1022.6,408.0 1023.3,405.0 1024.0,402.4 1024.7,404.2 1025.4,406.2 1026.1,408.2 1026.8,410.6 1027.5,411.3 1028.2,409.7 1028.9,408.9 1029.6,407.5 1030.3,406.5 1031.0,403.8 1031.7,403.7 1032.4,401.4 1033.1,400.4 1033.8,399.5 1034.5,399.9 1035.2,398.9 1035.9,396.7 1036.6,396.4 1037.3,396.5 1038.0,397.4 1038.7,398.4 1039.4,399.1 1040.1,399.3 1040.8,401.0 1041.5,401.5 1042.2,400.5 1042.9,400.9 1043.6,400.6 1044.3,400.0 1045.0,402.0 1045.7,402.8 1046.4,401.2 1047.1,400.2 1047.8,401.1 1048.5,400.9 1049.2,400.6 1049.9,401.3 1050.6,400.1 1051.3,400.1 1052.0,397.9 1052.7,398.8 1053.4,399.0 1054.1,396.9 1054.8,396.5 1055.5,397.9 1056.2,397.9 1056.9,395.5 1057.6,396.5 1058.3,394.9 1059.0,396.1 1059.7,395.5 1060.4,394.1 1061.1,393.7 1061.8,394.8 1062.5,393.9 1063.2,394.2 1063.9,393.0 1064.6,392.6 1065.3,394.0 1066.0,392.9 1066.7,392.7 1067.4,393.1 1068.1,393.8 1068.8,394.0 1069.5,394.7 1070.2,393.5 1070.9,394.7 1071.6,394.4 1072.3,395.0 1073.0,394.9 1073.7,395.1 1074.4,395.3 1075.1,395.6 1075.8,394.8 1076.5,394.6 1077.2,395.2 1077.9,395.5 1078.6,394.6 1079.3,394.7 1080.0,394.1 1080.7,395.8 1081.4,396.6 1082.1,395.1 1082.8,394.7 1083.5,394.9 1084.2,395.6 1084.9,395.4 1085.6,397.3 1086.3,395.1 1087.0,395.9 1087.7,395.5 1088.4,397.1 1089.1,397.5 1089.8,396.1 1090.5,395.9 1091.2,397.0 1091.9,397.4 1092.6,398.3 1093.3,396.1 1094.0,396.4 1094.7,396.6 1095.4,396.8 1096.1,396.8 1096.8,398.1 1097.5,397.7 1098.2,396.8 1098.9,396.7 1099.6,396.2 1100.3,395.4 1101.0,395.4 1101.7,393.6 1102.4,393.0 1103.1,392.4 1103.8,390.8 1104.5,389.4 1105.2,389.3 1105.9,388.3 1106.6,386.3 1107.3,385.7 1108.0,385.5 1108.7,383.9 1109.4,382.7 1110.1,381.8 1110.8,382.7 1111.5,381.9 1112.2,380.5 1112.9,379.7 1113.6,378.6 1114.3,377.2 1115.0,377.3 1115.7,375.7 1116.4,373.6 1117.1,371.5 1117.8,370.5 1118.5,368.3 1119.2,366.9 1119.9,364.6 1120.6,361.8 1121.3,358.3 1122.0,355.5 1122.7,354.8 1123.4,353.7 1124.1,354.2 1124.8,353.2 1125.5,354.7 1126.2,357.2 1126.9,357.4 1127.6,355.1 1128.3,351.2 1129.0,349.4 1129.7,345.4 1130.4,344.3 1131.1,343.4 1131.8,348.9 1132.5,352.3 1133.2,355.0 1133.9,353.6 1134.6,351.8 1135.3,353.2 1136.0,355.9 1136.7,359.5 1137.4,361.7 1138.1,364.7 1138.8,364.5 1139.5,364.0 1140.2,361.6 1140.9,361.3" stroke="#ff00ff" stroke-width="1.8"/><polyline points="559.0,392.7 560.0,394.9 561.0,397.2 562.0,399.5 563.0,401.8 564.0,404.1 565.0,406.4 566.0,408.8 567.0,411.1 568.0,413.4 569.0,415.7 570.0,418.0 571.0,420.4 572.0,422.7 573.0,425.0 574.0,427.4 575.0,429.7 576.0,432.0 577.0,434.4 578.0,436.7 579.0,439.1 580.0,441.4 581.0,443.8 582.0,446.1 583.0,448.2 584.0,450.3 585.0,452.1 586.0,453.9 587.0,455.5 588.0,457.1 589.0,458.5 590.0,459.8 591.0,461.1 592.0,462.3 593.0,463.4 594.0,464.4 595.0,465.4 596.0,466.3 597.0,467.1 598.0,467.9 599.0,468.6 600.0,469.3 601.0,470.0 602.0,470.6 603.0,471.2 604.0,471.8 605.0,472.3 606.0,472.8 607.0,473.2 608.0,473.7 609.0,474.1 610.0,474.5 611.0,474.8 612.0,475.2 613.0,475.5 614.0,475.8 615.0,476.1 616.0,476.4 617.0,476.6 618.0,476.9 619.0,477.1 620.0,477.3 621.0,477.6 622.0,477.8 623.0,477.9 624.0,478.1 625.0,478.3 626.0,478.5 627.0,478.6 628.0,478.8 629.0,478.9 630.0,479.1 631.0,479.2 632.0,479.3 633.0,479.4 634.0,479.5 635.0,479.6 636.0,479.7 637.0,479.8 638.0,479.9 639.0,480.0 640.0,480.1 641.0,480.2 642.0,480.3 643.0,480.3 644.0,480.4 645.0,480.5 646.0,480.6 647.0,480.6 648.0,480.7 649.0,480.7 650.0,480.8 651.0,480.8 652.0,480.9 653.0,480.9 654.0,481.0 655.0,481.0 656.0,481.1 657.0,481.1 658.0,481.2 659.0,481.2 660.0,481.2 661.0,481.1 662.0,480.8 663.0,480.4 664.0,479.9 665.0,479.2 666.0,478.5 667.0,477.6 668.0,476.6 669.0,475.5 670.0,474.4 671.0,473.2 672.0,471.9 673.0,470.5 674.0,469.0 675.0,467.5 676.0,466.0 677.0,464.4 678.0,462.7 679.0,461.0 680.0,459.3 681.0,457.5 682.0,455.7 683.0,453.9 684.0,452.0 685.0,450.1 686.0,448.1 687.0,446.2 688.0,444.2 689.0,442.2 690.0,440.2 691.0,438.1 692.0,436.0 693.0,433.9 694.0,431.8 695.0,429.7 696.0,427.6 697.0,425.4 698.0,423.3 699.0,421.1 700.0,418.9 701.0,416.7 702.0,414.5 703.0,412.3 704.0,410.1 705.0,407.8 706.0,405.6 707.0,403.3 708.0,401.1 709.0,398.8 710.0,396.5 711.0,394.3 712.0,392.0 713.0,389.7 714.0,387.4 715.0,385.1 716.0,382.8 717.0,380.5 718.0,378.2 719.0,375.8 720.0,373.5 721.0,371.2 722.0,368.9 723.0,366.5 724.0,364.2 725.0,361.8 726.0,359.5 727.0,357.2 728.0,354.8 729.0,352.5 730.0,350.1 731.0,347.8 732.0,345.4 733.0,343.0 734.0,340.7 735.0,338.3 736.0,336.0 737.0,333.9 738.0,331.9 739.0,330.0 740.0,328.3 741.0,326.7 742.0,325.1 743.0,323.7 744.0,322.4 745.0,321.1 746.0,320.0 747.0,318.9 748.0,317.9 749.0,316.9 750.0,316.0 751.0,315.2 752.0,314.4 753.0,313.7 754.0,313.0 755.0,312.3 756.0,311.7 757.0,311.1 758.0,310.6 759.0,310.0 760.0,309.6 761.0,309.1 762.0,308.7 763.0,308.3 764.0,307.9 765.0,307.5 766.0,307.2 767.0,306.9 768.0,306.6 769.0,306.3 770.0,306.0 771.0,305.7 772.0,305.5 773.0,305.2 774.0,305.0 775.0,304.8 776.0,304.6 777.0,304.4 778.0,304.2 779.0,304.1 780.0,303.9 781.0,303.8 782.0,303.6 783.0,303.5 784.0,303.3 785.0,303.2 786.0,303.1 787.0,303.0 788.0,302.8 789.0,302.7 790.0,302.6 791.0,302.5 792.0,302.5 793.0,302.4 794.0,302.3 795.0,302.2 796.0,302.1 797.0,302.0 798.0,302.0 799.0,301.9 800.0,301.8 801.0,301.8 802.0,301.7 803.0,301.7 804.0,301.6 805.0,301.5 806.0,301.5 807.0,301.4 808.0,301.4 809.0,301.4 810.0,301.3 811.0,301.3 812.0,301.2 813.0,301.2 814.0,301.2 815.0,301.1 816.0,301.1 817.0,301.1 818.0,301.0 819.0,301.0 820.0,301.0 821.0,300.9 822.0,300.9 823.0,300.9 824.0,300.9 825.0,300.8 826.0,300.8 827.0,300.8 828.0,300.8 829.0,300.7 830.0,300.7 831.0,300.7 832.0,300.7 833.0,300.7 834.0,300.7 835.0,300.6 836.0,300.6 837.0,300.6 838.0,300.6 839.0,300.6 840.0,300.6 841.0,300.6 842.0,300.5 843.0,300.5 844.0,300.5 845.0,300.5 846.0,300.5 847.0,300.5 848.0,300.5 849.0,300.5 850.0,300.5 851.0,300.4 852.0,300.4 853.0,300.4 854.0,300.4 855.0,300.4 856.0,300.4 857.0,300.4 858.0,300.4 859.0,300.4 860.0,300.4 861.0,300.4 862.0,300.4 863.0,300.4 864.0,300.4 865.0,300.3 866.0,300.3 867.0,300.3 868.0,300.3 869.0,300.3 870.0,300.3 871.0,300.3 872.0,300.3 873.0,300.3 874.0,300.3 875.0,300.3 876.0,300.3 877.0,300.3 878.0,300.3 879.0,300.3 880.0,300.3 881.0,300.3 882.0,300.3 883.0,300.3 884.0,300.3 885.0,300.3 886.0,300.3 887.0,300.3 888.0,300.3 889.0,300.3 890.0,300.3 891.0,300.3 892.0,300.3 893.0,300.3 894.0,300.3 895.0,300.3 896.0,300.2 897.0,300.2 898.0,300.2 899.0,300.2 900.0,300.2 901.0,300.2 902.0,300.2 903.0,300.2 904.0,300.2 905.0,300.2 906.0,300.2 907.0,300.2 908.0,300.2 909.0,300.2 910.0,300.2 911.0,300.2 912.0,300.2 913.0,300.2 914.0,300.2 915.0,300.2 916.0,300.2 917.0,300.2 918.0,300.2 919.0,300.2 920.0,300.2 921.0,300.2 922.0,300.2 923.0,300.2 924.0,300.2 925.0,300.2 926.0,300.2 927.0,300.2 928.0,300.2 929.0,300.2 930.0,300.2 931.0,300.2 932.0,300.2 933.0,300.2 934.0,300.2 935.0,300.2 936.0,300.2 937.0,300.2 938.0,300.2 939.0,300.2 940.0,300.2 941.0,300.2 942.0,300.2 943.0,300.2 944.0,300.2 945.0,300.4 946.0,300.7 947.0,301.2 948.0,301.7 949.0,302.4 950.0,303.2 951.0,304.2 952.0,305.2 953.0,306.3 954.0,307.4 955.0,308.7 956.0,310.0 957.0,311.4 958.0,312.9 959.0,314.4 960.0,315.9 961.0,317.6 962.0,319.2 963.0,320.9 964.0,322.7 965.0,324.4 966.0,326.3 967.0,328.1 968.0,330.0 969.0,331.9 970.0,333.9 971.0,335.8 972.0,337.8 973.0,339.8 974.0,341.9 975.0,343.9 976.0,346.0 977.0,348.1 978.0,350.2 979.0,352.3 980.0,354.4 981.0,356.6 982.0,358.7 983.0,360.9 984.0,363.1 985.0,365.3 986.0,367.5 987.0,369.7 988.0,371.9 989.0,374.1 990.0,376.4 991.0,378.6 992.0,380.9 993.0,383.1 994.0,385.4 995.0,387.6 996.0,389.9 997.0,392.2 998.0,394.5 999.0,396.8 1000.0,399.1 1001.0,401.4 1002.0,403.7 1003.0,406.0 1004.0,408.3 1005.0,410.6 1006.0,412.9 1007.0,415.3 1008.0,417.6 1009.0,419.9 1010.0,422.2 1011.0,424.6 1012.0,426.9 1013.0,429.2 1014.0,431.6 1015.0,433.9 1016.0,436.3 1017.0,438.6 1018.0,441.0 1019.0,443.3 1020.0,445.6 1021.0,447.8 1022.0,449.9 1023.0,451.8 1024.0,453.6 1025.0,455.2 1026.0,456.8 1027.0,458.2 1028.0,459.6 1029.0,460.8 1030.0,462.0 1031.0,463.1 1032.0,464.2 1033.0,465.2 1034.0,466.1 1035.0,466.9 1036.0,467.7 1037.0,468.5 1038.0,469.2 1039.0,469.9 1040.0,470.5 1041.0,471.1 1042.0,471.7 1043.0,472.2 1044.0,472.7 1045.0,473.1 1046.0,473.6 1047.0,474.0 1048.0,474.4 1049.0,474.8 1050.0,475.1 1051.0,475.4 1052.0,475.7 1053.0,476.0 1054.0,476.3 1055.0,476.6 1056.0,476.8 1057.0,477.1 1058.0,477.3 1059.0,477.5 1060.0,477.7 1061.0,477.9 1062.0,478.1 1063.0,478.3 1064.0,478.4 1065.0,478.6 1066.0,478.7 1067.0,478.9 1068.0,479.0 1069.0,479.2 1070.0,479.3 1071.0,479.4 1072.0,479.5 1073.0,479.6 1074.0,479.7 1075.0,479.8 1076.0,479.9 1077.0,480.0 1078.0,480.1 1079.0,480.2 1080.0,480.3 1081.0,480.3 1082.0,480.4 1083.0,480.5 1084.0,480.5 1085.0,480.6 1086.0,480.7 1087.0,480.7 1088.0,480.8 1089.0,480.8 1090.0,480.9 1091.0,480.9 1092.0,481.0 1093.0,481.0 1094.0,481.0 1095.0,481.1 1096.0,481.1 1097.0,481.2 1098.0,481.2 1099.0,481.1 1100.0,480.9 1101.0,480.6 1102.0,480.2 1103.0,479.6 1104.0,479.0 1105.0,478.2 1106.0,477.4 1107.0,476.5 1108.0,475.5 1109.0,474.4 1110.0,473.2 1111.0,472.0 1112.0,470.7 1113.0,469.4 1114.0,468.0 1115.0,466.6 1116.0,465.1 1117.0,463.5 1118.0,461.9 1119.0,460.3 1120.0,458.6 1121.0,456.9 1122.0,455.2 1123.0,453.4 1124.0,451.6 1125.0,449.8 1126.0,447.9 1127.0,446.0 1128.0,444.1 1129.0,442.2 1130.0,440.2 1131.0,438.2 1132.0,436.2 1133.0,434.2 1134.0,432.1 1135.0,430.1 1136.0,428.0 1137.0,425.9 1138.0,423.8 1139.0,421.7 1140.0,419.6 1141.0,417.4" stroke="#00ff00" stroke-width="1.5"/><polyline points="558.5,427.4 581.6,482.2 659.7,482.2 735.2,300.2 943.6,300.2 1019.6,482.2 1097.9,482.2 1141.0,378.3" stroke="#ffff00" stroke-width="1.5"/><polyline points="558.5,214.2 589.1,214.2 590.1,230.3 591.1,246.4 592.1,261.9 593.1,277.0 594.1,291.5 595.1,303.6 596.1,313.7 597.1,322.8 598.1,331.2 599.1,339.7 600.1,348.1 601.1,356.2 602.1,363.8 603.1,370.6 604.1,376.6 605.1,381.9 606.1,387.0 607.1,392.4 608.1,398.7 609.1,406.5 610.1,415.1 611.1,422.7 612.1,428.5 613.1,433.6 614.1,438.2 615.1,442.4 616.1,446.5 617.1,450.6 618.1,454.9 619.1,459.3 620.1,463.6 621.1,467.8 622.1,471.8 623.1,475.5 624.1,478.9 625.1,482.0 626.1,484.9 627.1,487.8 628.1,490.5 629.1,493.1 630.1,495.6 631.1,497.9 632.1,500.2 633.1,502.3 634.1,504.4 635.1,506.3 636.1,508.2 637.1,509.9 638.1,511.6 639.1,513.2 640.1,514.7 641.1,516.2 642.1,517.6 643.1,519.0 644.1,520.4 645.1,521.6 646.1,522.9 647.1,524.1 648.1,525.3 649.1,526.4 650.1,527.5 651.1,528.5 652.1,529.5 653.1,530.5 654.1,531.5 655.1,532.5 656.1,533.5 657.1,534.5 658.1,535.5 659.1,536.5 659.7,537.1 660.2,536.0 660.7,535.0 661.2,533.8 661.7,532.4 662.2,530.7 662.7,528.6 663.2,526.3 663.7,523.5 664.2,520.0 664.7,515.3 665.2,509.7 665.7,503.7 666.2,497.6 666.7,491.8 667.2,485.9 667.7,479.9 668.2,473.8 668.7,467.6 669.2,461.3 669.7,454.9 670.2,448.6 670.7,442.2 671.2,435.6 671.7,428.8 672.2,421.7 672.7,414.2 673.2,406.4 673.7,398.4 674.2,390.4 674.7,382.5 675.2,375.0 675.7,367.9 676.2,361.2 676.7,354.6 677.2,347.9 677.7,340.8 678.2,333.2 678.7,325.3 679.2,316.9 679.7,308.0 680.2,298.3 680.7,287.8 681.2,276.2 681.7,263.4 682.2,248.3 682.7,231.2 683.2,214.2 1027.3,214.2 1028.3,230.3 1029.3,246.4 1030.3,261.9 1031.3,277.0 1032.3,291.5 1033.3,303.6 1034.3,313.7 1035.3,322.8 1036.3,331.2 1037.3,339.7 1038.3,348.1 1039.3,356.2 1040.3,363.8 1041.3,370.6 1042.3,376.6 1043.3,381.9 1044.3,387.0 1045.3,392.4 1046.3,398.7 1047.3,406.5 1048.3,415.1 1049.3,422.7 1050.3,428.5 1051.3,433.6 1052.3,438.2 1053.3,442.4 1054.3,446.5 1055.3,450.6 1056.3,454.9 1057.3,459.3 1058.3,463.6 1059.3,467.8 1060.3,471.8 1061.3,475.5 1062.3,478.9 1063.3,482.0 1064.3,484.9 1065.3,487.8 1066.3,490.5 1067.3,493.1 1068.3,495.6 1069.3,497.9 1070.3,500.2 1071.3,502.3 1072.3,504.4 1073.3,506.3 1074.3,508.2 1075.3,509.9 1076.3,511.6 1077.3,513.2 1078.3,514.7 1079.3,516.2 1080.3,517.6 1081.3,519.0 1082.3,520.4 1083.3,521.6 1084.3,522.9 1085.3,524.1 1086.3,525.3 1087.3,526.4 1088.3,527.5 1089.3,528.5 1090.3,529.5 1091.3,530.5 1092.3,531.5 1093.3,532.5 1094.3,533.5 1095.3,534.5 1096.3,535.5 1097.3,536.5 1097.9,537.1 1098.4,536.0 1098.9,535.0 1099.4,533.8 1099.9,532.4 1100.4,530.7 1100.9,528.6 1101.4,526.3 1101.9,523.5 1102.4,520.0 1102.9,515.3 1103.4,509.7 1103.9,503.7 1104.4,497.6 1104.9,491.8 1105.4,485.9 1105.9,479.9 1106.4,473.8 1106.9,467.6 1107.4,461.3 1107.9,454.9 1108.4,448.6 1108.9,442.2 1109.4,435.6 1109.9,428.8 1110.4,421.7 1110.9,414.2 1111.4,406.4 1111.9,398.4 1112.4,390.4 1112.9,382.5 1113.4,375.0 1113.9,367.9 1114.4,361.2 1114.9,354.6 1115.4,347.9 1115.9,340.8 1116.4,333.2 1116.9,325.3 1117.4,316.9 1117.9,308.0 1118.4,298.3 1118.9,287.8 1119.4,276.2 1119.9,263.4 1120.4,248.3 1120.9,231.2 1121.4,214.2 1141.0,214.2" stroke="#87ceeb" stroke-width="1.5"/><path d="M558.5 408.1 H1141.0" stroke="#ff0000" stroke-width="1.6"/></g><path d="M558.0 555.0 H1141.5 " stroke="#dcdcdc" stroke-width="1.6"/><path d="M558.5 550.0 V559.0 M616.5 552.0 V558.0 M674.5 550.0 V559.0 M733.5 552.0 V558.0 M791.5 550.0 V559.0 M849.5 552.0 V558.0 M907.5 550.0 V559.0 M966.5 552.0 V558.0 M1024.5 550.0 V559.0 M1082.5 552.0 V558.0 M1141.3 550.0 V559.0 " stroke="#e6e6e6" stroke-width="1.2"/><path d="M547.6 403.7 L557.6 408.4 L547.6 413.09999999999997Z" fill="#ff0000"/><path d="M547.6 440.3 L557.6 445 L547.6 449.7Z" fill="#ff00ff"/><path d="M547.6 477.1 L557.6 481.8 L547.6 486.5Z" fill="#00ff00"/><path d="M547.6 550.0 L557.6 554.7 L547.6 559.4000000000001Z" fill="#87ceeb"/><path d="M669.0 180 L680.2 180 L674.6 190.6Z" fill="#fff"/><path d="M672.2 182 H677.0 M674.6 182 V187" stroke="#000" stroke-width="1" fill="none"/></svg>
<span class="t" style="left:558.8px;top:559.4499999999999px;height:18px;line-height:18px;font-size:12px;color:#fff;"><span class="r" style="left:-14.00px;transform:scaleX(0.932);">0.000</span></span>
<span class="t" style="left:675.3px;top:559.4499999999999px;height:18px;line-height:18px;font-size:12px;color:#fff;"><span class="r" style="left:-21.00px;transform:scaleX(0.968);">153.600</span></span>
<span class="t" style="left:791.8px;top:559.4499999999999px;height:18px;line-height:18px;font-size:12px;color:#fff;"><span class="r" style="left:-21.00px;transform:scaleX(0.968);">307.200</span></span>
<span class="t" style="left:908.3px;top:559.4499999999999px;height:18px;line-height:18px;font-size:12px;color:#fff;"><span class="r" style="left:-21.00px;transform:scaleX(0.968);">460.800</span></span>
<span class="t" style="left:1024.8px;top:559.4499999999999px;height:18px;line-height:18px;font-size:12px;color:#fff;"><span class="r" style="left:-21.00px;transform:scaleX(0.968);">614.400</span></span>
<span class="t" style="left:1120.5px;top:559.4499999999999px;height:18px;line-height:18px;font-size:12px;color:#fff;"><span class="r" style="left:0.00px;transform:scaleX(0.971);">768.000 ms</span></span>
<div class="a" style="left:558px;top:575px;width:583px;height:17px;background:#cdcdcd;"></div>
<div class="a" style="left:558px;top:575px;width:17px;height:17px;background:#f0f0f0;"></div>
<div class="a" style="left:1123.8px;top:575px;width:17.2px;height:17px;background:#f0f0f0;"></div>
<svg style="left:558px;top:575px" width="584" height="17" viewBox="0 0 584 17"><path d="M10.5 4.5 L6.5 8.5 L10.5 12.5" stroke="#8a8a8a" stroke-width="1.2" fill="none"/><path d="M572.5 4.5 L576.5 8.5 L572.5 12.5" stroke="#8a8a8a" stroke-width="1.2" fill="none"/></svg>
<div class="a" style="left:248px;top:634px;width:80px;height:18px;background:#808080;"></div>
<span class="t" style="left:288px;top:635.15px;height:19px;line-height:19px;font-size:13px;color:#fff;"><span class="r" style="left:-15.70px;transform:scaleX(0.875);">AUTO</span></span>
<div class="a" style="left:248px;top:652px;width:80px;height:22px;background:linear-gradient(#f3f3f3,#e9e9e9 50%,#dedede);border:1px solid #9a9a9a;"></div>
<span class="t" style="left:306.0px;top:654.9499999999999px;height:18px;line-height:18px;font-size:12px;color:#111;"><span class="r" style="left:-25.80px;transform:scaleX(0.966);">3500</span></span>
<svg style="left:316px;top:661px" width="6" height="4" viewBox="0 0 6 4"><path d="M0.5 0.5 L3 3 L5.5 0.5" stroke="#444" stroke-width="1" fill="none"/></svg>
<div class="a" style="left:347px;top:634px;width:80px;height:18px;background:#808080;"></div>
<span class="t" style="left:387px;top:635.15px;height:19px;line-height:19px;font-size:13px;color:#fff;"><span class="r" style="left:-15.70px;transform:scaleX(0.875);">AUTO</span></span>
<div class="a" style="left:347px;top:652px;width:80px;height:22px;background:linear-gradient(#f3f3f3,#e9e9e9 50%,#dedede);border:1px solid #9a9a9a;"></div>
<span class="t" style="left:405.0px;top:654.9499999999999px;height:18px;line-height:18px;font-size:12px;color:#111;"><span class="r" style="left:-19.35px;transform:scaleX(0.966);">100</span></span>
<svg style="left:415px;top:661px" width="6" height="4" viewBox="0 0 6 4"><path d="M0.5 0.5 L3 3 L5.5 0.5" stroke="#444" stroke-width="1" fill="none"/></svg>
<div class="a" style="left:446px;top:634px;width:80px;height:18px;background:#808080;"></div>
<span class="t" style="left:486px;top:635.15px;height:19px;line-height:19px;font-size:13px;color:#fff;"><span class="r" style="left:-15.70px;transform:scaleX(0.875);">AUTO</span></span>
<div class="a" style="left:446px;top:652px;width:80px;height:22px;background:linear-gradient(#f3f3f3,#e9e9e9 50%,#dedede);border:1px solid #9a9a9a;"></div>
<span class="t" style="left:504.0px;top:654.9499999999999px;height:18px;line-height:18px;font-size:12px;color:#111;"><span class="r" style="left:-6.45px;transform:scaleX(0.964);">1</span></span>
<svg style="left:514px;top:661px" width="6" height="4" viewBox="0 0 6 4"><path d="M0.5 0.5 L3 3 L5.5 0.5" stroke="#444" stroke-width="1" fill="none"/></svg>
<div class="a" style="left:545px;top:634px;width:80px;height:18px;background:#808080;"></div>
<span class="t" style="left:585px;top:635.15px;height:19px;line-height:19px;font-size:13px;color:#fff;"><span class="r" style="left:-15.70px;transform:scaleX(0.875);">AUTO</span></span>
<div class="a" style="left:545px;top:652px;width:80px;height:22px;background:linear-gradient(#f3f3f3,#e9e9e9 50%,#dedede);border:1px solid #9a9a9a;"></div>
<span class="t" style="left:603.0px;top:654.9499999999999px;height:18px;line-height:18px;font-size:12px;color:#111;"><span class="r" style="left:-19.35px;transform:scaleX(0.966);">100</span></span>
<svg style="left:613px;top:661px" width="6" height="4" viewBox="0 0 6 4"><path d="M0.5 0.5 L3 3 L5.5 0.5" stroke="#444" stroke-width="1" fill="none"/></svg>
<span class="t" style="left:629.3px;top:659.65px;height:18px;line-height:18px;font-size:12px;color:#fff;"><span class="r" style="left:0.00px;transform:scaleX(1.088);">div</span></span>
<div class="a" style="left:1048px;top:607.5px;width:70px;height:21.5px;background:linear-gradient(#f3f3f3,#e9e9e9 50%,#dedede);border:1px solid #9a9a9a;"></div>
<span class="t" style="left:1071.0px;top:609.65px;height:18px;line-height:18px;font-size:12px;color:#111;"><span class="r" style="left:0.00px;transform:scaleX(0.876);">FULL</span></span>
<svg style="left:1105.5px;top:616px" width="6" height="4" viewBox="0 0 6 4"><path d="M0.5 0.5 L3 3 L5.5 0.5" stroke="#444" stroke-width="1" fill="none"/></svg>
<span class="t" style="left:1122.9px;top:612.65px;height:18px;line-height:18px;font-size:12px;color:#fff;"><span class="r" style="left:0.00px;transform:scaleX(1.061);">ms/div</span></span>
<div class="a" style="left:673px;top:637px;width:20px;height:14px;background:#000;border:1px solid #6a6a6a;"></div>
<div class="a" style="left:673px;top:653px;width:20px;height:14px;background:#000;border:1px solid #6a6a6a;"></div>
<svg style="left:673px;top:637px" width="20" height="30" viewBox="0 0 20 30"><path d="M4 10.5 L10 3.8 L16 10.5Z" fill="#8c8c8c"/><path d="M4 19.5 L10 26.2 L16 19.5Z" fill="#8c8c8c"/></svg>
<div class="a" style="left:700px;top:636px;width:16px;height:16px;background:#ff0000;border:1px solid #8a8a8a;"></div>
<svg style="left:700px;top:636px" width="16" height="16" viewBox="0 0 16 16"><path d="M11.63 6.36 L13.22 6.86 L13.22 8.74 L11.63 9.24 L11.06 10.22 L11.42 11.85 L9.80 12.79 L8.57 11.66 L7.43 11.66 L6.20 12.79 L4.58 11.85 L4.94 10.22 L4.37 9.24 L2.78 8.74 L2.78 6.86 L4.37 6.36 L4.94 5.38 L4.58 3.75 L6.20 2.81 L7.43 3.94 L8.57 3.94 L9.80 2.81 L11.42 3.75 L11.06 5.38Z M9.60 7.80 A1.6 1.6 0 1 0 6.40 7.80 A1.6 1.6 0 1 0 9.60 7.80Z" fill="#666" fill-rule="evenodd"/></svg>
<span class="t" style="left:700.3px;top:652.15px;height:18px;line-height:18px;font-size:12px;color:#f01414;"><span class="r" style="left:0.00px;transform:scaleX(0.983);">I/O1: /S-ON</span></span>
<div class="a" style="left:796px;top:637px;width:20px;height:14px;background:#000;border:1px solid #6a6a6a;"></div>
<div class="a" style="left:796px;top:653px;width:20px;height:14px;background:#000;border:1px solid #6a6a6a;"></div>
<svg style="left:796px;top:637px" width="20" height="30" viewBox="0 0 20 30"><path d="M4 10.5 L10 3.8 L16 10.5Z" fill="#8c8c8c"/><path d="M4 19.5 L10 26.2 L16 19.5Z" fill="#8c8c8c"/></svg>
<div class="a" style="left:823px;top:636px;width:16px;height:16px;background:#00ffff;border:1px solid #8a8a8a;"></div>
<svg style="left:823px;top:636px" width="16" height="16" viewBox="0 0 16 16"><path d="M11.63 6.36 L13.22 6.86 L13.22 8.74 L11.63 9.24 L11.06 10.22 L11.42 11.85 L9.80 12.79 L8.57 11.66 L7.43 11.66 L6.20 12.79 L4.58 11.85 L4.94 10.22 L4.37 9.24 L2.78 8.74 L2.78 6.86 L4.37 6.36 L4.94 5.38 L4.58 3.75 L6.20 2.81 L7.43 3.94 L8.57 3.94 L9.80 2.81 L11.42 3.75 L11.06 5.38Z M9.60 7.80 A1.6 1.6 0 1 0 6.40 7.80 A1.6 1.6 0 1 0 9.60 7.80Z" fill="#666" fill-rule="evenodd"/></svg>
<span class="t" style="left:823.3px;top:652.15px;height:18px;line-height:18px;font-size:12px;color:#00e8e8;"><span class="r" style="left:0.00px;transform:scaleX(0.984);">I/O2: /P-CON</span></span>
<div class="a" style="left:919px;top:637px;width:20px;height:14px;background:#000;border:1px solid #6a6a6a;"></div>
<div class="a" style="left:919px;top:653px;width:20px;height:14px;background:#000;border:1px solid #6a6a6a;"></div>
<svg style="left:919px;top:637px" width="20" height="30" viewBox="0 0 20 30"><path d="M4 10.5 L10 3.8 L16 10.5Z" fill="#8c8c8c"/><path d="M4 19.5 L10 26.2 L16 19.5Z" fill="#8c8c8c"/></svg>
<div class="a" style="left:946px;top:636px;width:16px;height:16px;background:#ff69b4;border:1px solid #8a8a8a;"></div>
<svg style="left:946px;top:636px" width="16" height="16" viewBox="0 0 16 16"><path d="M11.63 6.36 L13.22 6.86 L13.22 8.74 L11.63 9.24 L11.06 10.22 L11.42 11.85 L9.80 12.79 L8.57 11.66 L7.43 11.66 L6.20 12.79 L4.58 11.85 L4.94 10.22 L4.37 9.24 L2.78 8.74 L2.78 6.86 L4.37 6.36 L4.94 5.38 L4.58 3.75 L6.20 2.81 L7.43 3.94 L8.57 3.94 L9.80 2.81 L11.42 3.75 L11.06 5.38Z M9.60 7.80 A1.6 1.6 0 1 0 6.40 7.80 A1.6 1.6 0 1 0 9.60 7.80Z" fill="#666" fill-rule="evenodd"/></svg>
<span class="t" style="left:946.3px;top:652.15px;height:18px;line-height:18px;font-size:12px;color:#ff69b4;"><span class="r" style="left:0.00px;transform:scaleX(1.005);">I/O3: /COIN</span></span>
<div class="a" style="left:1042px;top:637px;width:20px;height:14px;background:#f0f0f0;border:1px solid #f0f0f0;"></div>
<div class="a" style="left:1042px;top:653px;width:20px;height:14px;background:#f0f0f0;border:1px solid #f0f0f0;"></div>
<svg style="left:1042px;top:637px" width="20" height="30" viewBox="0 0 20 30"><path d="M2.6 11 L10 3.4 L17.4 11Z" fill="#777" stroke="#222" stroke-width="1"/><path d="M2.6 19 L10 26.6 L17.4 19Z" fill="#777" stroke="#222" stroke-width="1"/></svg>
<div class="a" style="left:1069px;top:636px;width:16px;height:16px;background:#f0f0f0;border:1px solid #f0f0f0;"></div>
<svg style="left:1069px;top:636px" width="16" height="16" viewBox="0 0 16 16"><path d="M11.63 6.36 L13.22 6.86 L13.22 8.74 L11.63 9.24 L11.06 10.22 L11.42 11.85 L9.80 12.79 L8.57 11.66 L7.43 11.66 L6.20 12.79 L4.58 11.85 L4.94 10.22 L4.37 9.24 L2.78 8.74 L2.78 6.86 L4.37 6.36 L4.94 5.38 L4.58 3.75 L6.20 2.81 L7.43 3.94 L8.57 3.94 L9.80 2.81 L11.42 3.75 L11.06 5.38Z M9.60 7.80 A1.6 1.6 0 1 0 6.40 7.80 A1.6 1.6 0 1 0 9.60 7.80Z" fill="#555" fill-rule="evenodd"/></svg>
<span class="t" style="left:1069.3px;top:652.15px;height:18px;line-height:18px;font-size:12px;color:#6a6a6a;"><span class="r" style="left:0.00px;transform:scaleX(1.078);">I/O4: -----</span></span>
<div class="a" style="left:210px;top:695px;width:982px;height:1px;background:#6a6a6a;"></div>
<svg style="left:0px;top:0px" width="30" height="30" viewBox="0 0 30 30"><rect x="6.4" y="7.8" width="11.2" height="10.4" fill="#fff" stroke="#0a7dff" stroke-width="1.1"/><path d="M7.2 13.5 C8.2 8.5 10.2 8.5 11.6 12.5 C12.8 16 14.6 16 16.6 9.5" stroke="#444" stroke-width="1.1" fill="none"/><rect x="10.2" y="18.0" width="3" height="2.6000000000000005" fill="#fff" stroke="#555" stroke-width="0.8"/><rect x="13.0" y="16.2" width="9" height="6.4" fill="#3c3c3c"/><rect x="14.2" y="17.599999999999998" width="2" height="3.4000000000000004" fill="#9a9a9a"/><rect x="16.6" y="17.599999999999998" width="1.6" height="3.4000000000000004" fill="#8a8a8a"/><rect x="18.799999999999997" y="17.599999999999998" width="1.6" height="3.4000000000000004" fill="#777"/></svg>
<svg style="left:16px;top:36px" width="20" height="20" viewBox="0 0 20 20"><path d="M1.5 16.5 V6.5 H6 L7.3 8 H12.5 V10.5" fill="#f4f4f4" stroke="#7a7a7a" stroke-width="1.1"/><path d="M1.5 16.5 L4.8 10.6 H16.6 L13.2 16.5 Z" fill="#d6d6d6" stroke="#7a7a7a" stroke-width="1.1" stroke-linejoin="round"/><path d="M7.2 6.2 C9 3.2 12.6 3 15 5.2" stroke="#0a7dff" stroke-width="1.7" fill="none"/><path d="M16.9 2.6 L16.8 7.6 L12.4 6.3 Z" fill="#0a7dff"/></svg>
<svg style="left:70px;top:34px" width="22" height="22" viewBox="0 0 22 22"><path d="M4.6 4.5 H17.4 V18.3 H6.3999999999999995 L4.6 16.5 Z" fill="#9a9a9a" stroke="#5a5a5a" stroke-width="1"/><rect x="7.8" y="5.1" width="6.4" height="6.2" fill="#fff" stroke="#777" stroke-width="0.6"/><path d="M9.0 6.9 H13.0 M9.0 8.9 H13.0" stroke="#555" stroke-width="0.9"/><rect x="8.2" y="13.5" width="5.8" height="4.6" fill="#fff"/><rect x="10.0" y="14.5" width="1.1" height="2.8" fill="#666"/></svg>
<svg style="left:161px;top:34px" width="24" height="22" viewBox="0 0 24 22"><path d="M4.5 4.5 H17.3 V18.3 H6.3 L4.5 16.5 Z" fill="#9a9a9a" stroke="#5a5a5a" stroke-width="1"/><rect x="7.7" y="5.1" width="6.4" height="6.2" fill="#fff" stroke="#777" stroke-width="0.6"/><path d="M8.9 6.9 H12.9 M8.9 8.9 H12.9" stroke="#555" stroke-width="0.9"/><rect x="8.1" y="13.5" width="5.8" height="4.6" fill="#fff"/><rect x="9.9" y="14.5" width="1.1" height="2.8" fill="#666"/><path d="M17.4 6.6 L19.6 9.2 L12.6 15.6 L10.4 13 Z" fill="#0a7dff"/><path d="M10.4 13 L12.6 15.6 L8.6 17.2 Z" fill="#fff"/><path d="M9.6 15.4 L10.6 16.5 L8.5 17.3 Z" fill="#333"/></svg>
<svg style="left:284px;top:34px" width="22" height="22" viewBox="0 0 22 22"><path d="M9 4.5 H18.2 V12.5 L15.8 14.6 H9 Z" fill="#fff" stroke="#555" stroke-width="1.2" stroke-linejoin="round"/><path d="M18 12.4 L15.6 14.6 V12.4 Z" fill="#666"/><path d="M3.6 17.4 C4 12 8 8.6 13 9" stroke="#0a7dff" stroke-width="2" fill="none" stroke-linecap="round"/><path d="M11.6 5.8 L16.2 9.2 L11.8 12.4 Z" fill="#0a7dff"/></svg>
<svg style="left:364px;top:34px" width="20" height="22" viewBox="0 0 20 22"><rect x="6.8" y="4.2" width="8" height="13.4" fill="#3a3a3a"/><path d="M8.6 6.5 H13 M8.6 8.6 H13" stroke="#fff" stroke-width="1"/><path d="M12 14.5 L13.4 15.4 L12 16.3Z" fill="#ddd"/><circle cx="7.3" cy="14.4" r="3.9" fill="#3a3a3a" stroke="#d8e6ec" stroke-width="0.9"/><rect x="6.7" y="13.6" width="1.3" height="3" fill="#aaa"/><rect x="6.7" y="11.8" width="1.3" height="1.2" fill="#aaa"/></svg>
<svg style="left:450px;top:34px" width="18" height="22" viewBox="0 0 18 22"><path d="M3.6 3.6 H10.8 M3.6 6.4 H10.8 M3.6 10.4 H10.8 M6.6 3.6 V10.4" stroke="#6a6a6a" stroke-width="1" fill="none"/><rect x="3.4" y="14.200000000000001" width="3" height="2.4000000000000004" fill="#fff" stroke="#555" stroke-width="0.8"/><rect x="6.199999999999999" y="12.4" width="8.6" height="6.2" fill="#3c3c3c"/><rect x="7.4" y="13.8" width="2" height="3.2" fill="#9a9a9a"/><rect x="9.8" y="13.8" width="1.6" height="3.2" fill="#8a8a8a"/><rect x="12.0" y="13.8" width="1.6" height="3.2" fill="#777"/></svg>
<svg style="left:556px;top:34px" width="24" height="22" viewBox="0 0 24 22"><rect x="3.9" y="4.6" width="9.4" height="7.6" fill="#fff" stroke="#0a7dff" stroke-width="1.2"/><path d="M5 9.6 C5.8 5.6 7.4 5.6 8.4 8 M10 8 C11 6.6 11.6 6.6 12.4 5.6" stroke="#444" stroke-width="1.1" fill="none"/><rect x="10.1" y="10.5" width="9.2" height="7.8" fill="#fff" stroke="#0a7dff" stroke-width="1.2"/><path d="M11.2 15.4 C12 11.4 13.6 11.4 14.6 14.4 C15.4 16.6 16.8 16.6 18.2 12" stroke="#444" stroke-width="1.1" fill="none"/></svg>
<svg style="left:26px;top:80px" width="32" height="30" viewBox="0 0 32 30"><rect x="3.4" y="3.9" width="18.6" height="15.8" fill="#fff" stroke="#0a7dff" stroke-width="1.2"/><path d="M4.6 14.5 C6 5.5 9.4 5.5 11.4 11.5 C13.4 17 16.6 16.5 20.8 6" stroke="#444" stroke-width="1.2" fill="none"/><path d="M23.44 19.76 L25.26 21.51 L23.95 23.78 L21.53 23.08 L20.21 23.83 L19.61 26.28 L16.99 26.28 L16.39 23.83 L15.07 23.08 L12.65 23.78 L11.34 21.51 L13.16 19.76 L13.16 18.24 L11.34 16.49 L12.65 14.22 L15.07 14.92 L16.39 14.17 L16.99 11.72 L19.61 11.72 L20.21 14.17 L21.53 14.92 L23.95 14.22 L25.26 16.49 L23.44 18.24Z" fill="#444"/><circle cx="18.3" cy="19" r="2" fill="#8ab8f0"/></svg>
<svg style="left:26px;top:130px" width="32" height="30" viewBox="0 0 32 30"><rect x="3.4" y="3.9" width="18.6" height="15.8" fill="#fff" stroke="#0a7dff" stroke-width="1.2"/><path d="M4.6 14.5 C6 5.5 9.4 5.5 11.4 11.5 C13.4 17 16.6 16.5 20.8 6" stroke="#444" stroke-width="1.2" fill="none"/><path d="M13 12.4 L26 18.2 L13 24 Z" fill="#35c435" stroke="#1c1c1c" stroke-width="1.6" stroke-linejoin="round"/><circle cx="17.2" cy="18.2" r="1.9" fill="#d8f0a0"/></svg>
<svg style="left:970px;top:133px" width="24" height="24" viewBox="0 0 24 24"><rect x="4.5" y="4.4" width="8.6" height="8.6" fill="#fff" stroke="#111" stroke-width="1.2" stroke-dasharray="2.4 1.4"/><path d="M14.6 14.6 L19 18.6" stroke="#555" stroke-width="2"/><circle cx="12.4" cy="12.3" r="3.7" fill="#e4e4e4" stroke="#6e6e6e" stroke-width="1"/><path d="M10.2 12.3 H14.6 M12.4 10.1 V14.5" stroke="#111" stroke-width="1"/></svg>
<svg style="left:1079px;top:133px" width="24" height="24" viewBox="0 0 24 24"><path d="M9 5 V19.8 M5 16 H20" stroke="#2684ee" stroke-width="1.8" fill="none"/><path d="M6.9 4 H11.1 V7 L9 8.2 L6.9 7 Z" fill="#0a7dff"/><path d="M21 13.9 V18.1 H18 L16.8 16 L18 13.9 Z" fill="#0a7dff"/></svg>
</body></html>
